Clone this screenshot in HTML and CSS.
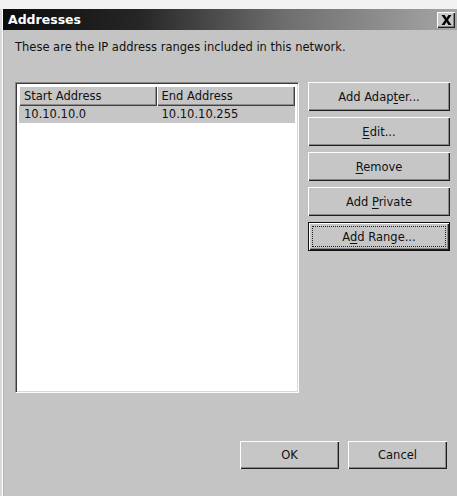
FILE: index.html
```html
<!DOCTYPE html>
<html>
<head>
<meta charset="utf-8">
<title>Addresses</title>
<link rel="stylesheet" href="styles.css">
</head>
<body>
<div class="frame">
  <div class="frame-top"></div>
  <div class="titlebar">
    <span class="title">Addresses</span>
    <span class="close-btn">
      <svg width="11" height="10" viewBox="0 0 11 10"><path d="M0.5 0h3L5.5 3 7.5 0h3L7 5l3.5 5h-3L5.5 7 3.5 10h-3L4 5z" fill="#000"/></svg>
    </span>
  </div>
  <div class="dialog">
    <p class="intro">These are the IP address ranges included in this network.</p>
    <div class="main">
      <div class="listview">
        <div class="lv-header">
          <div class="lv-col col-start">Start Address</div>
          <div class="lv-col col-end">End Address</div>
        </div>
        <div class="lv-row selected">
          <div class="lv-cell col-start">10.10.10.0</div>
          <div class="lv-cell col-end">10.10.10.255</div>
        </div>
      </div>
      <div class="side-buttons">
        <button class="btn"><span>Add Adap<u>t</u>er...</span></button>
        <button class="btn"><span><u>E</u>dit...</span></button>
        <button class="btn"><span><u>R</u>emove</span></button>
        <button class="btn"><span>Add <u>P</u>rivate</span></button>
        <button class="btn default"><span class="focus"><span>A<u>d</u>d Range...</span></span></button>
      </div>
    </div>
    <div class="footer">
      <button class="btn wide"><span>OK</span></button>
      <button class="btn wide"><span>Cancel</span></button>
    </div>
  </div>
</div>
</body>
</html>
```

FILE: styles.css
```css
html, body {
  margin: 0;
  padding: 0;
}

body {
  width: 457px;
  height: 496px;
  overflow: hidden;
  background: #c4c4c4;
  font-family: "DejaVu Sans", Verdana, sans-serif;
  font-size: 11.5px;
  color: #111;
}

.frame {
  height: 496px;
  box-shadow: inset 2px 0 #dadada, inset 3px 0 #fdfdfd, inset 4px 0 #b4b4b4;
}

.frame-top {
  height: 9px;
  background: #f2f2f2;
}

.titlebar {
  height: 21px;
  margin-left: 3px;
  display: flex;
  align-items: center;
  justify-content: space-between;
  padding: 0 2px 0 5px;
  background: linear-gradient(to right, #0c0c0c 0%, #262626 30%, #6e6e6e 62%, #a6a6a6 100%);
}

.title {
  color: #fff;
  font-weight: bold;
  font-size: 12.5px;
}

.close-btn {
  width: 18px;
  height: 16px;
  display: flex;
  align-items: center;
  justify-content: center;
  background: #c8c8c8;
  box-shadow: inset 1px 1px #fff, inset -1px -1px #202020, inset -2px -2px #808080;
}

.dialog {
  padding: 0 0 0 15px;
}

.intro {
  margin: 10px 0 0 0;
  line-height: 14px;
  height: 14px;
}

.main {
  display: flex;
  gap: 9px;
  margin-top: 28px;
}

.listview {
  width: 284px;
  height: 311px;
  box-sizing: border-box;
  background: #fff;
  padding: 3px;
  border: 1px solid;
  border-color: #8a8a8a #fdfdfd #fdfdfd #8a8a8a;
  box-shadow: inset 1px 1px #3a3a3a, inset -1px -1px #d8d8d8;
}

.lv-header {
  display: flex;
  height: 20px;
}

.lv-col {
  box-sizing: border-box;
  height: 20px;
  line-height: 18px;
  padding-left: 4px;
  background: #c6c6c6;
  border-top: 1px solid #fff;
  border-left: 1px solid #fff;
  box-shadow: inset -1px -1px #404040, inset -2px -2px #8c8c8c;
}

.lv-col.col-start,
.lv-cell.col-start {
  width: 138px;
}

.lv-col.col-end,
.lv-cell.col-end {
  width: 139px;
}

.lv-row {
  display: flex;
  height: 17px;
  line-height: 16px;
}

.lv-row.selected {
  background: #c6c6c6;
}

.lv-cell {
  padding-left: 5px;
  box-sizing: border-box;
}

.side-buttons {
  display: flex;
  flex-direction: column;
  gap: 6px;
}

.btn {
  font-family: inherit;
  font-size: 11.5px;
  color: #111;
  width: 142px;
  height: 29px;
  padding: 0;
  margin: 0;
  background: #c6c6c6;
  border: none;
  box-shadow: inset 1px 1px #fdfdfd, inset -1px -1px #1e1e1e, inset -2px -2px #888;
  display: flex;
  align-items: center;
  justify-content: center;
}

.btn u {
  text-decoration-thickness: 1px;
  text-underline-offset: 2px;
}

.btn.default {
  box-shadow: inset 0 0 0 1px #101010, inset 2px 2px #fdfdfd, inset -2px -2px #1e1e1e, inset -3px -3px #888;
}

.focus {
  display: flex;
  align-items: center;
  justify-content: center;
  width: 132px;
  height: 19px;
  outline: 1px dotted #222;
}

.footer {
  display: flex;
  justify-content: flex-end;
  gap: 9px;
  padding-right: 10px;
  margin-top: 48px;
}

.btn.wide {
  width: 99px;
  height: 28px;
}
```
